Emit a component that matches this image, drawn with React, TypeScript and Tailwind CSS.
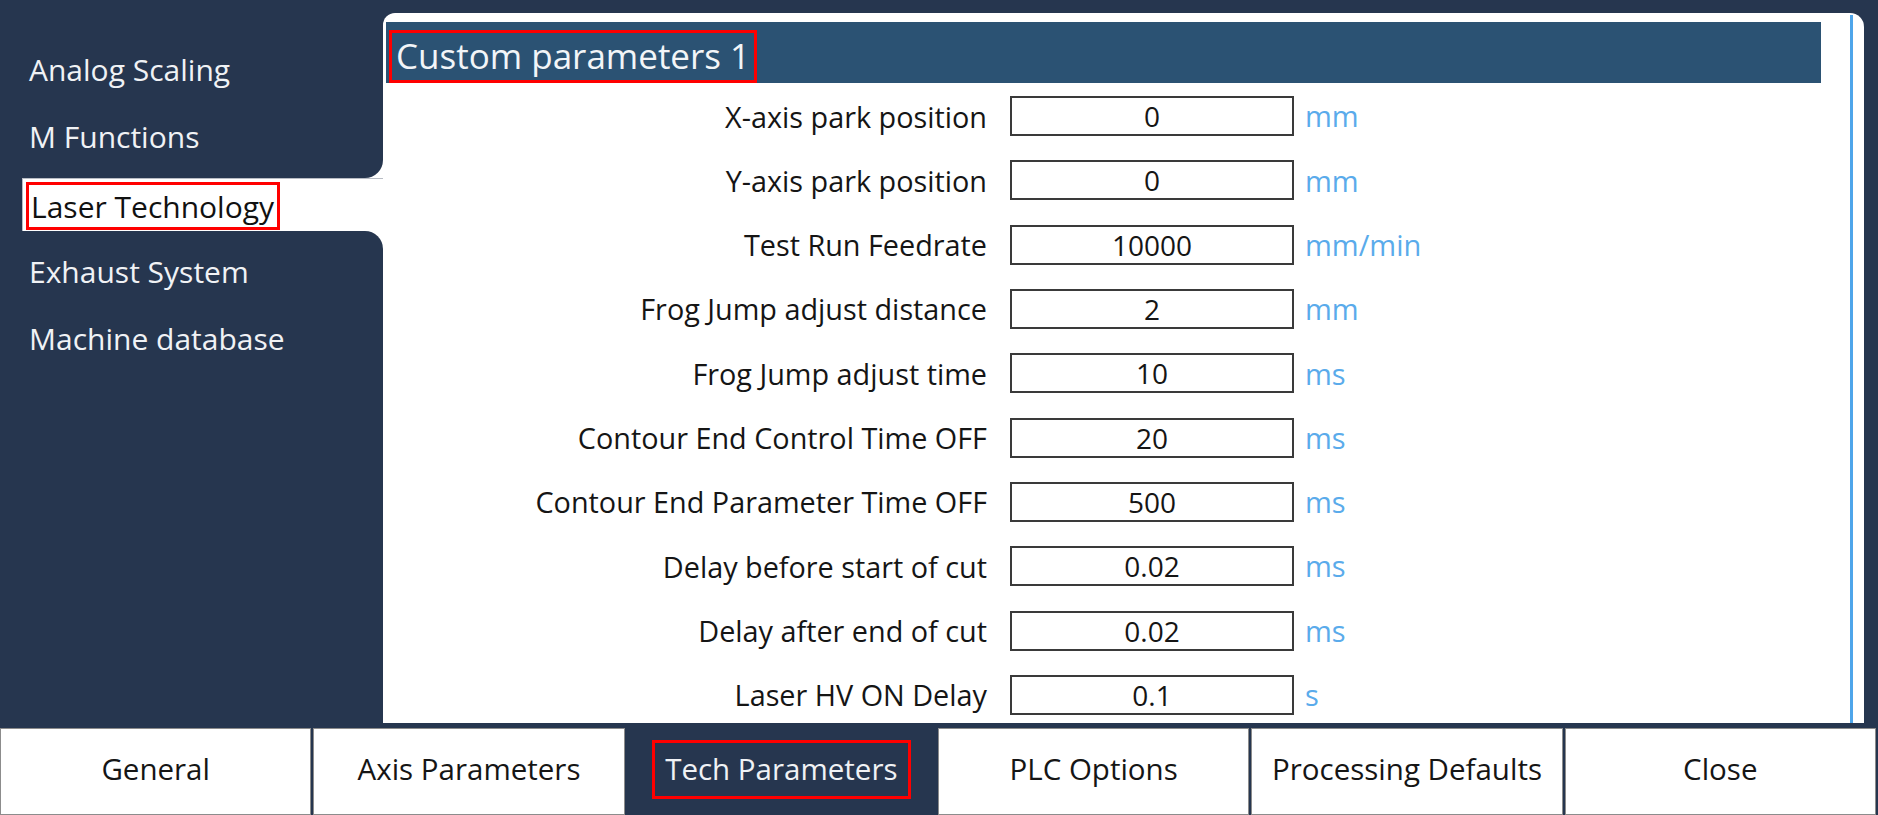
import React from 'react'

type Param = {
  label: string;
  value: string;
  unit: string;
};

const params: Param[] = [
  { label: "X-axis park position", value: "0", unit: "mm" },
  { label: "Y-axis park position", value: "0", unit: "mm" },
  { label: "Test Run Feedrate", value: "10000", unit: "mm/min" },
  { label: "Frog Jump adjust distance", value: "2", unit: "mm" },
  { label: "Frog Jump adjust time", value: "10", unit: "ms" },
  { label: "Contour End Control Time OFF", value: "20", unit: "ms" },
  { label: "Contour End Parameter Time OFF", value: "500", unit: "ms" },
  { label: "Delay before start of cut", value: "0.02", unit: "ms" },
  { label: "Delay after end of cut", value: "0.02", unit: "ms" },
  { label: "Laser HV ON Delay", value: "0.1", unit: "s" },
];

const tabs = ["General", "Axis Parameters", "Tech Parameters", "PLC Options", "Processing Defaults", "Close"];

const SideItem = ({ label }: { label: string }) => (
  <div className="h-[67px] flex items-center pl-[29px] text-[30px] text-[#f0f2f5]">{label}</div>
)

const App = () => {
  return (
    <div className="w-[1878px] h-[815px] bg-[#26364f] flex flex-col overflow-hidden font-['Open_Sans','Noto_Sans',sans-serif]">
      <div className="flex h-[728px]">
        {/* sidebar */}
        <div className="w-[383px] bg-white flex flex-col">
          <div className="bg-[#26364f] rounded-br-[18px] pt-[36px] pb-[8px]">
            <SideItem label="Analog Scaling" />
            <SideItem label="M Functions" />
          </div>
          <div className="flex h-[53px]">
            <div className="w-[22px] bg-[#26364f]" />
            <div className="flex-1 bg-white border-l border-t border-[#b8bcc4] flex items-end pl-[3px] pb-[1px]">
              <span className="border-[3px] border-[#ff0000] h-[48px] flex items-center pl-[2px] pr-[3px] text-[30px] text-[#111]">
                Laser Technology
              </span>
            </div>
          </div>
          <div className="flex-1 bg-[#26364f] rounded-tr-[18px] pt-[7px]">
            <SideItem label="Exhaust System" />
            <SideItem label="Machine database" />
          </div>
        </div>

        {/* panel */}
        <div className="mt-[13px] h-[710px] w-[1481px] bg-white rounded-tl-[12px] rounded-tr-[14px] flex">
          <div className="flex-1 pl-[3px] pt-[9px]">
            <div className="h-[61px] mr-[29px] bg-[#2b5273] flex items-end pl-[3px]">
              <span className="h-[53px] border-[3px] border-[#ff0000] flex items-center px-[4px] text-[35px] text-[#f2f5f8]">
                Custom parameters 1
              </span>
            </div>
            <div className="mt-[1px]">
              {params.map((p) => (
                <div key={p.label} className="h-[64.3px] flex items-center">
                  <div className="w-[601px] text-right text-[28.8px] text-[#151515]">{p.label}</div>
                  <div className="ml-[23px] w-[284px] h-[40px] border-2 border-[#3a3a3a] flex items-center justify-center text-[28px] text-[#151515]">
                    {p.value}
                  </div>
                  <div className="ml-[11px] text-[29px] text-[#5aabeb]">{p.unit}</div>
                </div>
              ))}
            </div>
          </div>
          <div className="w-[3px] bg-[#4ea5ea] mt-[2px]" />
          <div className="w-[11px]" />
        </div>
      </div>

      {/* bottom tabs */}
      <div className="flex gap-[2px] pr-[2px] h-[87px]">
        {tabs.map((t) =>
          t === "Tech Parameters" ? (
            <div key={t} className="flex-1 bg-[#26364f] flex items-center justify-center pb-[4px]">
              <span className="border-[3px] border-[#ff0000] h-[59px] flex items-center px-[10px] text-[29.5px] text-[#f0f2f5]">
                {t}
              </span>
            </div>
          ) : (
            <div key={t} className="flex-1 bg-white border border-[#8c8c8c] flex items-center justify-center pb-[4px] text-[29.5px] text-[#151515]">
              {t}
            </div>
          )
        )}
      </div>
    </div>
  )
}

export default App
